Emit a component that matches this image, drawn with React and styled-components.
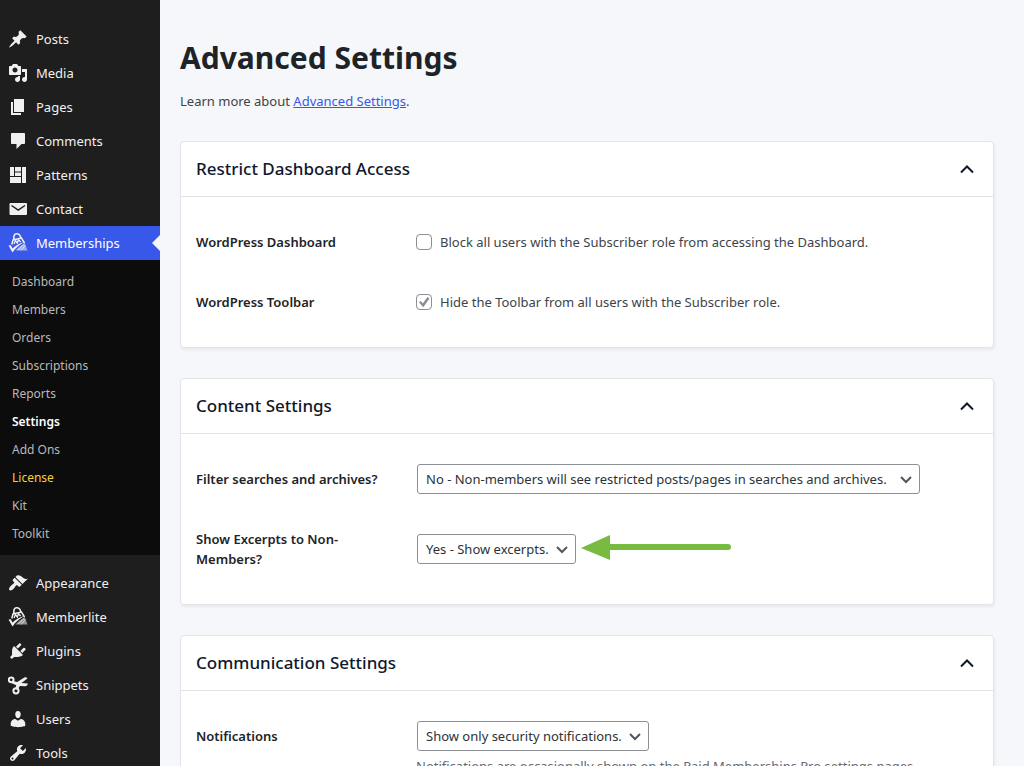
import React, { useState } from "react";
import styled, { createGlobalStyle, css } from "styled-components";

const fontStack = `"Noto Sans", "Open Sans", sans-serif`;

const GlobalStyle = createGlobalStyle`
  *, *::before, *::after { box-sizing: border-box; }
  body {
    margin: 0;
    background: #f5f7fa;
    color: #3c434a;
    font-family: ${fontStack};
    font-size: 13px;
    line-height: 20px;
  }
`;

const Page = styled.div`
  display: flex;
  height: 100vh;
  overflow: hidden;
`;

const Sidebar = styled.nav`
  flex: none;
  width: 160px;
  padding-top: 22px;
  background: #1e1e1e;
  overflow: hidden;
`;

const Menu = styled.ul`
  list-style: none;
  margin: 0 0 11px;
  padding: 0;
`;

const MenuLink = styled.a`
  position: relative;
  display: flex;
  align-items: center;
  gap: 8px;
  height: 34px;
  padding: 0 8px;
  color: #f0f0f1;
  text-decoration: none;
  ${(p) =>
    p.$current &&
    css`
      background: #3858e9;
      color: #fff;
      &::after {
        content: "";
        position: absolute;
        right: 0;
        top: 9px;
        border: 8px solid transparent;
        border-left-width: 0;
        border-right-color: #f5f7fa;
      }
    `}
`;

const MenuIcon = styled.svg`
  flex: none;
  width: 20px;
  height: 20px;
  fill: #f0f0f1;
`;

const SubMenu = styled.ul`
  list-style: none;
  margin: 0;
  padding: 8px 0 7px;
  background: #0c0c0c;
`;

const SubLink = styled.a`
  display: block;
  padding: 4px 12px;
  font-size: 12px;
  color: ${(p) => p.$color || "#b9b9b9"};
  font-weight: ${(p) => (p.$bold ? 600 : 400)};
  text-decoration: none;
`;

const Main = styled.main`
  flex: 1;
  min-width: 0;
  padding: 38px 30px 0 20px;
`;

const Title = styled.h1`
  margin: 0 0 13px;
  font-size: 30px;
  line-height: 40px;
  font-weight: 700;
  color: #1d2327;
`;

const Intro = styled.p`
  margin: 0 0 30px;
  a { color: #3858e9; }
`;

const Cards = styled.div`
  display: flex;
  flex-direction: column;
  gap: 30px;
`;

const Card = styled.section`
  background: #fff;
  border: 1px solid #e3e5e8;
  border-radius: 4px;
  box-shadow: 1px 2px 3px rgba(0, 0, 0, 0.06);
`;

const CardHeader = styled.h2`
  margin: 0;
  border-bottom: 1px solid #e1e3e6;
`;

const CardToggle = styled.button`
  display: flex;
  align-items: center;
  justify-content: space-between;
  width: 100%;
  height: 54px;
  padding: 0 19px 0 15px;
  border: 0;
  background: none;
  color: #10182b;
  font: 500 17px/24px ${fontStack};
  text-align: left;
  cursor: pointer;
`;

const Caret = styled.svg`
  width: 14px;
  height: 14px;
  fill: none;
  stroke: #10182b;
  stroke-width: 2;
  transform: ${(p) => (p.$open ? "none" : "rotate(180deg)")};
`;

const CardBody = styled.div`
  padding: 15px;
`;

const Row = styled.div`
  display: grid;
  grid-template-columns: 200px 1fr;
  column-gap: 20px;
  align-items: center;
`;

const RowLabel = styled.div`
  align-self: start;
  padding: 20px 10px 20px 0;
  color: #1d2327;
  font-weight: 600;
`;

const Field = styled.div`
  padding: 15px 0;
`;

const CheckLabel = styled.label`
  display: flex;
  align-items: center;
  gap: 8px;
  min-height: 30px;
`;

const CheckBox = styled.input`
  appearance: none;
  flex: none;
  display: grid;
  place-content: center;
  width: 16px;
  height: 16px;
  margin: 0;
  border: 1px solid #8c8f94;
  border-radius: 4px;
  background: #fff;
  &:checked::before {
    content: "";
    width: 12px;
    height: 12px;
    background: #8a8d96;
    clip-path: polygon(8% 52%, 24% 42%, 40% 62%, 78% 8%, 96% 20%, 44% 94%);
  }
`;

const FieldLine = styled.div`
  display: flex;
  align-items: center;
  gap: 5px;
`;

const SelectWrap = styled.span`
  position: relative;
  display: flex;
  margin-left: 1px;
`;

const SelectBox = styled.select`
  appearance: none;
  width: ${(p) => p.$width}px;
  height: 30px;
  padding: 0 24px 0 8px;
  border: 1px solid #8c8f94;
  border-radius: 3px;
  background: #fff;
  color: #2c3338;
  font: inherit;
`;

const SelectCaret = styled.svg`
  position: absolute;
  right: 8px;
  top: 9px;
  width: 12px;
  height: 12px;
  fill: none;
  stroke: #50575e;
  stroke-width: 2;
  pointer-events: none;
`;

const Arrow = styled.svg`
  width: 150px;
  height: 28px;
  fill: #77bb41;
  stroke: #77bb41;
`;

const Hint = styled.p`
  margin: 5px 0 0;
  color: #646970;
`;

const MemberIcon = (
  <>
    <g fill="none" stroke="#f0f0f1">
      <path d="M6 6.500C5.300 3 6.500 1 8.500.8s3.800 1.300 4.500 4.700" strokeWidth="1.600" />
      <path d="M3.800 11.500 5 7l8.500-2 3 5" strokeWidth="1.500" />
      <path d="m6 11 1.500-3.500L9.300 10l1.200-3.300L12.700 9" strokeWidth="1.300" />
    </g>
    <path d="m.5 12.500 2.300-.3 1.700 3.300c3.500-3.300 7-5.400 12-6.500-4.800 2.600-9 6-12 10.500z" />
    <path d="M7.500 17.500C10 14.500 13 12 16.800 10.200l2.700 7.300z" opacity=".55" />
    <path d="m10 17 6.500-6M13 17.500l4.300-5" stroke="#f0f0f1" strokeWidth=".8" />
  </>
);

const icons = {
  posts: (
    <path d="M10.44 3.02l1.82-1.82 6.36 6.35-1.83 1.82c-1.05-.68-2.48-.57-3.41.36l-.75.75c-.92.93-1.04 2.35-.35 3.41l-1.83 1.82-2.41-2.41-2.8 2.79c-.42.42-3.38 2.71-3.8 2.29s1.86-3.39 2.28-3.81l2.79-2.79L4.1 9.36l1.83-1.82c1.05.69 2.48.57 3.4-.36l.75-.75c.93-.92 1.05-2.35.36-3.41z" />
  ),
  media: (
    <path
      fillRule="evenodd"
      d="M13 11V4c0-.55-.45-1-1-1h-1.670L9 1H5L3.670 3H2c-.55 0-1 .45-1 1v7c0 .55.45 1 1 1h10c.55 0 1-.45 1-1zM7 4.500c1.380 0 2.500 1.120 2.500 2.500S8.380 9.500 7 9.500 4.500 8.380 4.500 7 5.620 4.500 7 4.500zM14 6h5v10.500c0 1.380-1.120 2.500-2.500 2.500S14 17.880 14 16.500s1.120-2.500 2.500-2.500c.17 0 .34.02.5.05V9h-3V6zm-4 8.050V13h2v3.500c0 1.380-1.120 2.500-2.500 2.500S7 17.880 7 16.500 8.120 14 9.500 14c.17 0 .34.02.5.05z"
    />
  ),
  pages: <path d="M6 15V2h10v13H6zm-1 1h8v2H3V5h2v11z" />,
  comments: (
    <path d="M4 2h12c.55 0 1 .45 1 1v9c0 .55-.45 1-1 1h-2.500l-5 5v-5H4c-.55 0-1-.45-1-1V3c0-.55.45-1 1-1z" />
  ),
  patterns: (
    <path d="M2 2h4v9H2zM7 2h6v4.500H7zM7 7.500h6V11H7zM14 2h4v16h-4zM2 12h11v6H2z" />
  ),
  contact: (
    <>
      <rect x="1.500" y="4" width="17.500" height="12" rx="1" />
      <path d="m3.500 6.500 6.700 4.700L17 6.500" fill="none" stroke="#1e1e1e" strokeWidth="1.500" />
    </>
  ),
  member: MemberIcon,
  appearance: (
    <path d="M14.480 11.060L7.410 3.990l1.500-1.500c.5-.56 2.300-.47 3.510.32 1.210.8 1.430 1.280 2.910 2.100 1.180.64 2.450 1.260 4.450.85zm-.71.71L6.700 4.700 4.930 6.470c-.39.39-.39 1.020 0 1.410l1.060 1.060c.39.39.39 1.030 0 1.420-.6.6-1.430 1.110-2.210 1.690-.35.26-.7.53-1.010.84C1.430 14.230.4 16.080 1.400 17.070c.99 1 2.840-.03 4.180-1.360.31-.31.58-.66.85-1.020.57-.78 1.080-1.610 1.690-2.210.39-.39 1.020-.39 1.410 0l1.060 1.060c.39.39 1.020.39 1.410 0z" />
  ),
  plugins: (
    <path d="M13.110 4.360L9.870 7.600 8 5.730l3.240-3.240c.35-.34 1.050-.2 1.560.32.52.51.66 1.210.31 1.550zm-8 1.770l.91-1.120 9.010 9.010-1.190.84c-.71.71-2.630 1.160-3.820 1.160H6.140L4.900 17.260c-.59.59-1.540.59-2.120 0-.59-.58-.59-1.530 0-2.120l1.240-1.240v-3.880c0-1.130.4-3.190 1.090-3.890zm7.260 3.970l3.240-3.240c.34-.35 1.040-.21 1.550.31.52.51.66 1.210.31 1.550l-3.240 3.250z" />
  ),
  snippets: (
    <>
      <g fill="none" stroke="#f0f0f1" strokeWidth="2">
        <circle cx="3.200" cy="4.800" r="2.400" />
        <circle cx="8" cy="15.800" r="2.600" />
      </g>
      <path d="M4.600 6 9.200 7l7.200-4.600c1.300-.6 2.600-.1 3 1.200L13.500 8l6.300.6c-.2 1.900-1.200 2.700-2.700 2.700l-5.300-.2-2 3.600-2.500-.8.900-3.700-4.400-2z" />
    </>
  ),
  users: (
    <path d="M10 9.250c-2.270 0-2.730-3.440-2.730-3.440C7 4.020 7.820 2 9.970 2c2.160 0 2.980 2.020 2.710 3.810 0 0-.41 3.440-2.680 3.440zm0 2.570L12.720 10c2.390 0 4.520 2.330 4.520 4.530v2.490s-3.650 1.130-7.240 1.130c-3.650 0-7.240-1.130-7.240-1.130v-2.490c0-2.250 1.940-4.480 4.470-4.480z" />
  ),
  tools: (
    <path
      fillRule="evenodd"
      d="M16.680 9.770c-1.340 1.340-3.300 1.670-4.950.99l-5.410 6.520c-.99.99-2.590.99-3.580 0s-.99-2.590 0-3.570l6.520-5.420c-.68-1.650-.35-3.610.99-4.950 1.280-1.280 3.120-1.620 4.720-1.060l-2.890 2.890 2.820 2.820 2.860-2.870c.53 1.580.18 3.390-1.080 4.650zM3.810 16.210c.4.39 1.040.39 1.430 0 .4-.4.4-1.040 0-1.430-.39-.4-1.030-.4-1.430 0-.39.39-.39 1.030 0 1.430z"
    />
  ),
};

const topItems = [
  ["posts", "Posts"],
  ["media", "Media"],
  ["pages", "Pages"],
  ["comments", "Comments"],
  ["patterns", "Patterns"],
  ["contact", "Contact"],
];

const subItems = [
  { label: "Dashboard" },
  { label: "Members" },
  { label: "Orders" },
  { label: "Subscriptions" },
  { label: "Reports" },
  { label: "Settings", color: "#fff", bold: true },
  { label: "Add Ons" },
  { label: "License", color: "#fcd034" },
  { label: "Kit" },
  { label: "Toolkit" },
];

const bottomItems = [
  ["appearance", "Appearance"],
  ["member", "Memberlite"],
  ["plugins", "Plugins"],
  ["snippets", "Snippets"],
  ["users", "Users"],
  ["tools", "Tools"],
];

function MenuItem({ icon, label, current, children }) {
  return (
    <li>
      <MenuLink href="#" $current={current} aria-current={current ? "page" : undefined}>
        <MenuIcon viewBox="0 0 20 20" aria-hidden="true">
          {icons[icon]}
        </MenuIcon>
        {label}
      </MenuLink>
      {children}
    </li>
  );
}

function SettingsCard({ title, children }) {
  const [open, setOpen] = useState(true);
  return (
    <Card>
      <CardHeader>
        <CardToggle type="button" aria-expanded={open} onClick={() => setOpen(!open)}>
          {title}
          <Caret viewBox="0 0 14 14" $open={open} aria-hidden="true">
            <path d="M1 10.500 7 4.500l6 6" />
          </Caret>
        </CardToggle>
      </CardHeader>
      {open && <CardBody>{children}</CardBody>}
    </Card>
  );
}

function CheckRow({ id, title, label, defaultChecked }) {
  return (
    <Row>
      <RowLabel>{title}</RowLabel>
      <Field>
        <CheckLabel htmlFor={id}>
          <CheckBox type="checkbox" id={id} defaultChecked={defaultChecked} />
          {label}
        </CheckLabel>
      </Field>
    </Row>
  );
}

function SelectRow({ id, title, value, width, after, hint }) {
  return (
    <Row>
      <RowLabel as="label" htmlFor={id}>
        {title}
      </RowLabel>
      <Field>
        <FieldLine>
          <SelectWrap>
            <SelectBox id={id} $width={width}>
              <option>{value}</option>
            </SelectBox>
            <SelectCaret viewBox="0 0 12 12" aria-hidden="true">
              <path d="m1 4 5 5 5-5" />
            </SelectCaret>
          </SelectWrap>
          {after}
        </FieldLine>
        {hint && <Hint>{hint}</Hint>}
      </Field>
    </Row>
  );
}

export default function App() {
  return (
    <>
      <GlobalStyle />
      <Page>
        <Sidebar aria-label="Main menu">
          <Menu>
            {topItems.map(([icon, label]) => (
              <MenuItem key={label} icon={icon} label={label} />
            ))}
            <MenuItem icon="member" label="Memberships" current>
              <SubMenu>
                {subItems.map((item) => (
                  <li key={item.label}>
                    <SubLink href="#" $color={item.color} $bold={item.bold}>
                      {item.label}
                    </SubLink>
                  </li>
                ))}
              </SubMenu>
            </MenuItem>
          </Menu>
          <Menu>
            {bottomItems.map(([icon, label]) => (
              <MenuItem key={label} icon={icon} label={label} />
            ))}
          </Menu>
        </Sidebar>
        <Main>
          <Title>Advanced Settings</Title>
          <Intro>
            Learn more about <a href="#">Advanced Settings</a>.
          </Intro>
          <Cards>
            <SettingsCard title="Restrict Dashboard Access">
              <CheckRow
                id="block-dashboard"
                title="WordPress Dashboard"
                label="Block all users with the Subscriber role from accessing the Dashboard."
              />
              <CheckRow
                id="hide-toolbar"
                title="WordPress Toolbar"
                label="Hide the Toolbar from all users with the Subscriber role."
                defaultChecked
              />
            </SettingsCard>
            <SettingsCard title="Content Settings">
              <SelectRow
                id="filter-queries"
                title="Filter searches and archives?"
                value="No - Non-members will see restricted posts/pages in searches and archives."
                width={503}
              />
              <SelectRow
                id="show-excerpts"
                title="Show Excerpts to Non-Members?"
                value="Yes - Show excerpts."
                width={159}
                after={
                  <Arrow viewBox="0 0 150 28" aria-hidden="true">
                    <path d="M0 13 29 0v25z" stroke="none" />
                    <path d="M28 12h119" strokeWidth="6" strokeLinecap="round" />
                  </Arrow>
                }
              />
            </SettingsCard>
            <SettingsCard title="Communication Settings">
              <SelectRow
                id="notifications"
                title="Notifications"
                value="Show only security notifications."
                width={232}
                hint="Notifications are occasionally shown on the Paid Memberships Pro settings pages."
              />
            </SettingsCard>
          </Cards>
        </Main>
      </Page>
    </>
  );
}
